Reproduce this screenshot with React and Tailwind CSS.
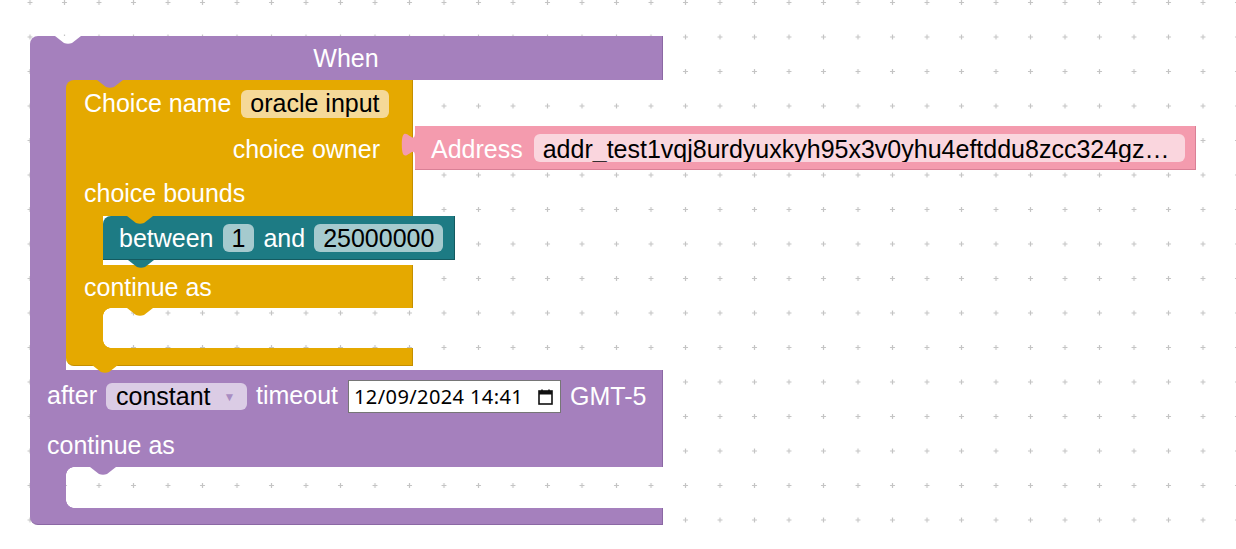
import React from 'react';

const PURPLE = '#a580bd';
const YELLOW = '#e5a900';
const PINK = '#f49bae';
const TEAL = '#1d7b84';

// small notch / tab drawn under or over a block edge
function Tab({ color, className }) {
  return (
    <svg className={`absolute ${className}`} width="26" height="8" viewBox="0 0 26 8">
      <path d="M0 0 L9 7 Q13 8.5 17 7 L26 0 Z" fill={color} />
    </svg>
  );
}

function Pill({ className, children }) {
  return (
    <div className={`h-[28px] rounded-[6px] px-[9px] flex items-center text-black whitespace-nowrap shrink-0 ${className}`}>
      {children}
    </div>
  );
}

// inner rounded corners of an empty statement hole
function HoleCorners({ top, bottom }) {
  return (
    <div className="flex flex-col justify-between w-[8px] shrink-0">
      <div className={`w-[8px] h-[8px] ${top}`} />
      <div className={`w-[8px] h-[8px] ${bottom}`} />
    </div>
  );
}

function AddressBlock() {
  return (
    <div className="relative shrink-0 mt-[1px] ml-[2px] h-[44px] bg-[#f49bae] border-b border-r border-[#d98096] flex items-center pl-[16px] pr-[10px] gap-[11px]">
      <svg className="absolute left-[-14px] top-[6px]" width="16" height="26" viewBox="0 0 16 26">
        <path d="M14 25 c0 -16.5 -13.2 13.2 -13.2 -12.4 s13.2 4.1 13.2 -12.4 L16 0 L16 25 Z" fill={PINK} />
      </svg>
      <span className="pt-[3px]">Address</span>
      <Pill className="bg-[#fad6de] w-[651px] overflow-hidden pt-[3px]">addr_test1vqj8urdyuxkyh95x3v0yhu4eftddu8zcc324gz…</Pill>
    </div>
  );
}

function BetweenBlock() {
  return (
    <div className="relative shrink-0 h-[44px] w-[352px] bg-[#1d7b84] rounded-tl-[8px] border-b border-r border-[#145a60] flex items-center pl-[16px] gap-[9px] pt-[1px]">
      <Tab color={YELLOW} className="left-[24px] top-0" />
      <Tab color={TEAL} className="left-[25px] top-[44px]" />
      <span>between</span>
      <Pill className="bg-[#a5cace]">1</Pill>
      <span>and</span>
      <Pill className="bg-[#a5cace]">25000000</Pill>
    </div>
  );
}

function ChoiceBlock() {
  return (
    <div className="relative flex flex-col shrink-0">
      <div className="w-[347px] bg-[#a580bd]">
        <div className="h-[45px] bg-[#e5a900] rounded-tl-[8px] border-r border-[#c48f00] flex items-center pl-[18px] gap-[10px] pt-[2px]">
          <span>Choice name</span>
          <Pill className="bg-[#f5d998]">oracle input</Pill>
        </div>
      </div>
      <Tab color={PURPLE} className="left-[31px] top-0" />
      <div className="flex items-start">
        <div className="w-[347px] shrink-0 h-[45px] bg-[#e5a900] border-r border-[#c48f00] flex items-center justify-end pr-[32px] pt-[3px]">
          choice owner
        </div>
        <AddressBlock />
      </div>
      <div className="w-[347px] h-[46px] bg-[#e5a900] border-r border-[#c48f00] flex items-center pl-[18px]">
        choice bounds
      </div>
      <div className="flex h-[49px]">
        <div className="w-[37px] shrink-0 bg-[#e5a900]" />
        <BetweenBlock />
      </div>
      <div className="w-[347px] h-[43px] bg-[#e5a900] border-r border-[#c48f00] flex items-center pl-[18px] pt-[1px]">
        continue as
      </div>
      <div className="relative flex h-[40px]">
        <div className="w-[37px] shrink-0 bg-[#e5a900]" />
        <HoleCorners
          top="bg-[radial-gradient(circle_at_100%_100%,transparent_7.5px,#e5a900_8px)]"
          bottom="bg-[radial-gradient(circle_at_100%_0%,transparent_7.5px,#e5a900_8px)]"
        />
        <Tab color={YELLOW} className="left-[61px] top-0" />
      </div>
      <div className="relative w-[347px] h-[18px] bg-[#e5a900] rounded-bl-[8px] border-r border-b border-[#c48f00]">
        <Tab color={YELLOW} className="left-[26px] top-[17px]" />
      </div>
    </div>
  );
}

function CalendarIcon() {
  return (
    <svg width="15" height="16" viewBox="0 0 15 16">
      <rect x="1" y="2" width="13" height="13" fill="none" stroke="#111" strokeWidth="1.6" />
      <rect x="1" y="2" width="13" height="3.5" fill="#111" />
      <path d="M4 0.5v3M11 0.5v3" stroke="#111" strokeWidth="1.6" />
    </svg>
  );
}

function WhenBlock() {
  return (
    <div className="relative w-[633px]">
      <Tab color="#ffffff" className="left-[25px] top-0" />
      <div className="h-[44px] bg-[#a580bd] rounded-tl-[8px] border-r border-[#8b68a4] flex items-center justify-center">
        When
      </div>
      <div className="flex h-[290px]">
        <div className="w-[36px] shrink-0 bg-[#a580bd]" />
        <ChoiceBlock />
      </div>
      <div className="h-[97px] bg-[#a580bd] border-r border-[#8b68a4] pl-[17px] pt-[10px] flex flex-col">
        <div className="h-[33px] flex items-center">
          <span className="-mt-[3px]">after</span>
          <div className="ml-[9px] h-[27px] w-[141px] rounded-[6px] bg-[#dbcce5] flex items-center pl-[10px] text-black">
            constant
            <span className="ml-[13px] text-[12px] text-[#a98dc2]">▼</span>
          </div>
          <span className="ml-[9px] -mt-[3px]">timeout</span>
          <div className="ml-[10px] w-[213px] h-[33px] bg-white border border-[#767676] flex items-center justify-between pl-[5px] pr-[7px] text-[20px] tracking-[0.4px] text-black font-['Noto_Sans',sans-serif]">
            <span>12/09/2024 14:41</span>
            <CalendarIcon />
          </div>
          <span className="ml-[9px]">GMT-5</span>
        </div>
        <div className="pt-[20px] leading-[25px]">continue as</div>
      </div>
      <div className="relative flex h-[41px]">
        <div className="w-[36px] shrink-0 bg-[#a580bd]" />
        <HoleCorners
          top="bg-[radial-gradient(circle_at_100%_100%,transparent_7.5px,#a580bd_8px)]"
          bottom="bg-[radial-gradient(circle_at_100%_0%,transparent_7.5px,#a580bd_8px)]"
        />
        <Tab color={PURPLE} className="left-[60px] top-0" />
      </div>
      <div className="h-[17px] bg-[#a580bd] rounded-bl-[8px] border-r border-b border-[#8b68a4]" />
    </div>
  );
}

export default function App() {
  return (
    <div className="relative w-[1236px] h-[549px] overflow-hidden bg-white">
      <svg className="absolute inset-0" width="1236" height="549">
        <defs>
          <pattern id="grid" patternUnits="userSpaceOnUse" width="34.5" height="34.5" x="12.75" y="-14.75">
            <path d="M14.75 17.25h5M17.25 14.75v5" stroke="#c4c4c4" strokeWidth="1.2" />
          </pattern>
        </defs>
        <rect width="100%" height="100%" fill="url(#grid)" />
      </svg>
      <div className="relative pt-[36px] pl-[30px] text-[25px] leading-none text-white font-['Liberation_Sans',Arial,sans-serif]">
        <WhenBlock />
      </div>
    </div>
  );
}
